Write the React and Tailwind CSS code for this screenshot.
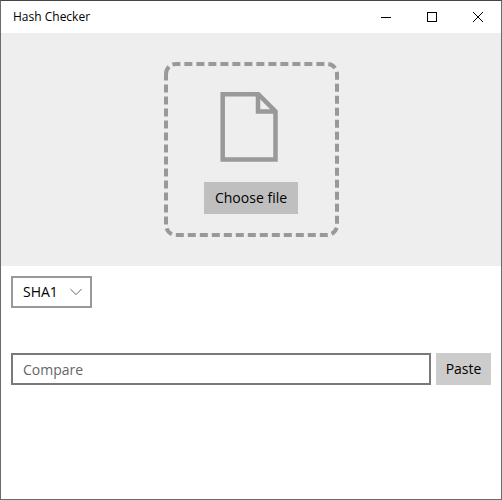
import { useState } from "react";

const ALGORITHMS = ["SHA1", "MD5", "SHA256", "SHA384", "SHA512"];

function TitleBar() {
  return (
    <header className="flex h-8 items-center justify-between bg-white">
      <h1 className="pl-3 text-xs">Hash Checker</h1>
      <div className="flex h-full">
        <button
          aria-label="Minimize"
          className="flex w-[46px] items-center justify-center hover:bg-gray-200"
        >
          <svg width="10" height="10" shapeRendering="crispEdges">
            <path d="M0 5.5H10" stroke="#000" />
          </svg>
        </button>
        <button
          aria-label="Maximize"
          className="flex w-[46px] items-center justify-center hover:bg-gray-200"
        >
          <svg width="10" height="10" shapeRendering="crispEdges">
            <rect x="0.5" y="0.5" width="9" height="9" fill="none" stroke="#000" />
          </svg>
        </button>
        <button
          aria-label="Close"
          className="flex w-[46px] items-center justify-center hover:bg-red-600"
        >
          <svg width="10" height="10">
            <path d="M0 0L10 10M10 0L0 10" stroke="#000" />
          </svg>
        </button>
      </div>
    </header>
  );
}

function FileIcon() {
  return (
    <svg
      width="63"
      height="70"
      viewBox="0 0 63 70"
      fill="none"
      stroke="#999"
      strokeWidth="4.5"
    >
      <path d="M2.7 2.2H38.3L55.5 19.4V67.6H2.7Z" />
      <path d="M38 2.2V19.4H55.5" />
    </svg>
  );
}

function DropZone() {
  return (
    <section className="flex justify-center bg-[#eee] py-[29px]">
      <div className="relative flex h-[175px] w-[175px] flex-col items-center pt-[30px]">
        <svg className="absolute inset-0" width="175" height="175" fill="none">
          <path
            d="M2 12A10 10 0 0 1 12 2H163A10 10 0 0 1 173 12V163A10 10 0 0 1 163 173H12A10 10 0 0 1 2 163Z"
            stroke="#999"
            strokeWidth="4"
            strokeDasharray="8 4"
          />
        </svg>
        <FileIcon />
        <button className="relative mt-5 h-8 min-w-[94px] bg-[#bfbfbf] px-[10px] text-sm hover:bg-[#b0b0b0]">
          Choose file
        </button>
      </div>
    </section>
  );
}

export default function App() {
  const [algorithm, setAlgorithm] = useState("SHA1");
  const [compare, setCompare] = useState("");

  async function handlePaste() {
    setCompare(await navigator.clipboard.readText());
  }

  return (
    <div className="flex min-h-screen flex-col border border-[#6b6b6b] border-t-[#444] bg-white font-['Segoe_UI','Open_Sans',sans-serif] text-black">
      <TitleBar />
      <DropZone />
      <main className="flex flex-col items-start gap-[45px] p-[10px]">
        <div className="relative">
          <select
            aria-label="Hash algorithm"
            value={algorithm}
            onChange={(e) => setAlgorithm(e.target.value)}
            className="h-8 w-[81px] appearance-none border-2 border-[#999] bg-white px-[10px] text-sm outline-none"
          >
            {ALGORITHMS.map((name) => (
              <option key={name}>{name}</option>
            ))}
          </select>
          <svg
            className="pointer-events-none absolute top-3 right-[10px]"
            width="12"
            height="8"
            fill="none"
            stroke="#666"
          >
            <path d="M0.4 1L6 6.6L11.6 1" />
          </svg>
        </div>
        <div className="flex w-full gap-[5px]">
          <input
            type="text"
            aria-label="Compare"
            placeholder="Compare"
            value={compare}
            onChange={(e) => setCompare(e.target.value)}
            className="h-8 min-w-0 flex-1 border-2 border-[#7a7a7a] px-[10px] text-sm outline-none placeholder:text-[#666]"
          />
          <button
            onClick={handlePaste}
            className="h-8 w-[55px] bg-[#ccc] text-sm hover:bg-[#bbb]"
          >
            Paste
          </button>
        </div>
      </main>
    </div>
  );
}
